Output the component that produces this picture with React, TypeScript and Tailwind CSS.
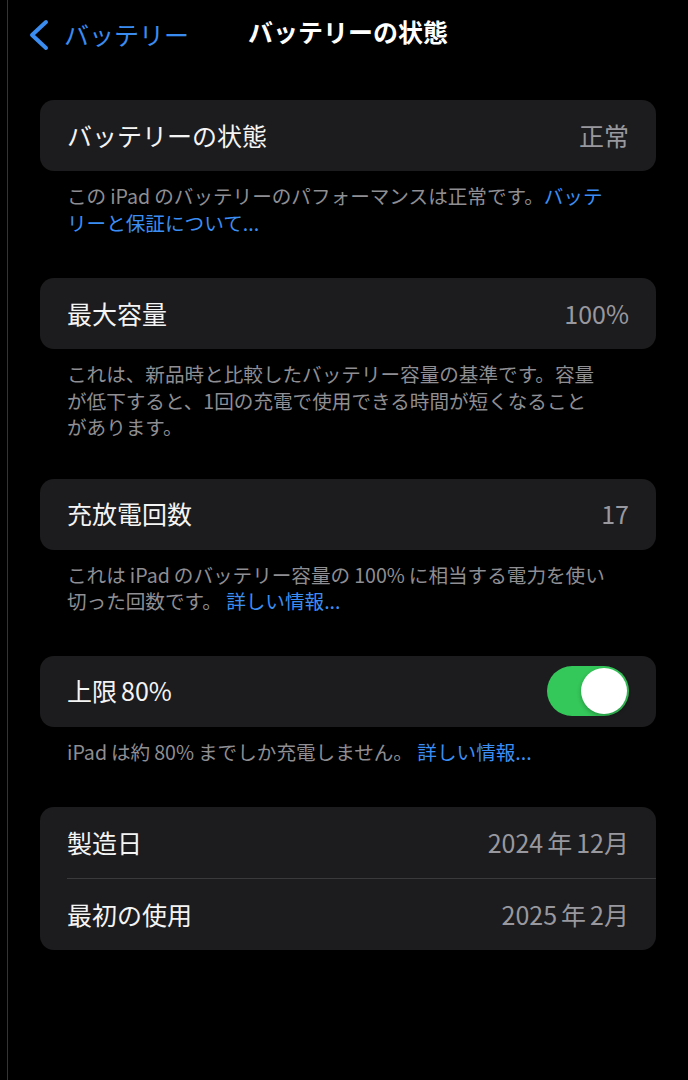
import { ReactNode } from "react";

const FONT = { fontFamily: '"Noto Sans CJK JP", "Noto Sans", sans-serif' };

function Row({ label, value, children }: { label: ReactNode; value?: ReactNode; children?: ReactNode }) {
  return (
    <div className="flex h-[71px] items-center justify-between pl-[27px] pr-[27px]">
      <span className="text-[25px] text-[#f4f4f5]">{label}</span>
      {value && <span className="text-[25px] text-[#98989e]">{value}</span>}
      {children}
    </div>
  );
}

function Card({ children }: { children: ReactNode }) {
  return <div className="overflow-hidden rounded-[14px] bg-[#1c1c1e]">{children}</div>;
}

function Note({ children }: { children: ReactNode }) {
  return (
    <div className="pl-[27px] pt-3 text-[19.6px] leading-[26.5px] text-[#8e8e93] whitespace-nowrap">
      {children}
    </div>
  );
}

function Link({ children }: { children: ReactNode }) {
  return <span className="text-[#3b8ef3]">{children}</span>;
}

// small gap between Japanese and Latin/digits, as iOS renders it
function Gap() {
  return <span className="inline-block w-[4px]" />;
}

function Toggle() {
  return (
    <div className="flex h-[50px] w-[82px] items-center justify-end rounded-full bg-[#34c759] p-[2px]">
      <div className="h-[46px] w-[46px] rounded-full bg-white shadow-[0_2px_4px_rgba(0,0,0,0.25)]" />
    </div>
  );
}

export default function App() {
  return (
    <div className="flex min-h-[1080px] bg-black" style={FONT}>
      <div className="w-[7px]" />
      <div className="w-px bg-[#343436]" />
      <div className="flex-1">
        {/* Nav bar */}
        <div className="relative flex h-[64px] items-center justify-center">
          <div className="absolute left-[20px] top-[16px] flex items-center gap-[14px]">
            <svg width="22" height="32" viewBox="0 0 22 32" fill="none">
              <polyline
                points="18,3 4,16 18,29"
                stroke="#3a8cf1"
                strokeWidth="4"
                strokeLinecap="round"
                strokeLinejoin="round"
              />
            </svg>
            <span className="text-[25px] text-[#3a8cf1]">バッテリー</span>
          </div>
          <span className="text-[25px] font-bold text-white">バッテリーの状態</span>
        </div>

        <div className="flex flex-col px-8 pt-[36px]">
          <Card>
            <Row label="バッテリーの状態" value="正常" />
          </Card>
          <Note>
            この<Gap />iPad<Gap />のバッテリーのパフォーマンスは正常です。<Link>バッテ</Link>
            <br />
            <Link>リーと保証について...</Link>
          </Note>

          <div className="mt-[42px]">
            <Card>
              <Row label="最大容量" value="100%" />
            </Card>
          </div>
          <Note>
            これは、新品時と比較したバッテリー容量の基準です。容量
            <br />
            が低下すると、1回の充電で使用できる時間が短くなること
            <br />
            があります。
          </Note>

          <div className="mt-[38px]">
            <Card>
              <Row label="充放電回数" value="17" />
            </Card>
          </div>
          <Note>
            これは<Gap />iPad<Gap />のバッテリー容量の<Gap />100%<Gap />に相当する電力を使い
            <br />
            切った回数です。 <Link>詳しい情報...</Link>
          </Note>

          <div className="mt-[41px]">
            <Card>
              <Row
                label={
                  <>
                    上限<Gap />80%
                  </>
                }
              >
                <Toggle />
              </Row>
            </Card>
          </div>
          <Note>
            iPad<Gap />は約<Gap />80%<Gap />までしか充電しません。 <Link>詳しい情報...</Link>
          </Note>

          <div className="mt-[42px]">
            <Card>
              <Row
                label="製造日"
                value={
                  <>
                    2024<Gap />年<Gap />12月
                  </>
                }
              />
              <div className="ml-[27px] h-px bg-[#3a3a3c]" />
              <Row
                label="最初の使用"
                value={
                  <>
                    2025<Gap />年<Gap />2月
                  </>
                }
              />
            </Card>
          </div>
        </div>
      </div>
    </div>
  );
}
